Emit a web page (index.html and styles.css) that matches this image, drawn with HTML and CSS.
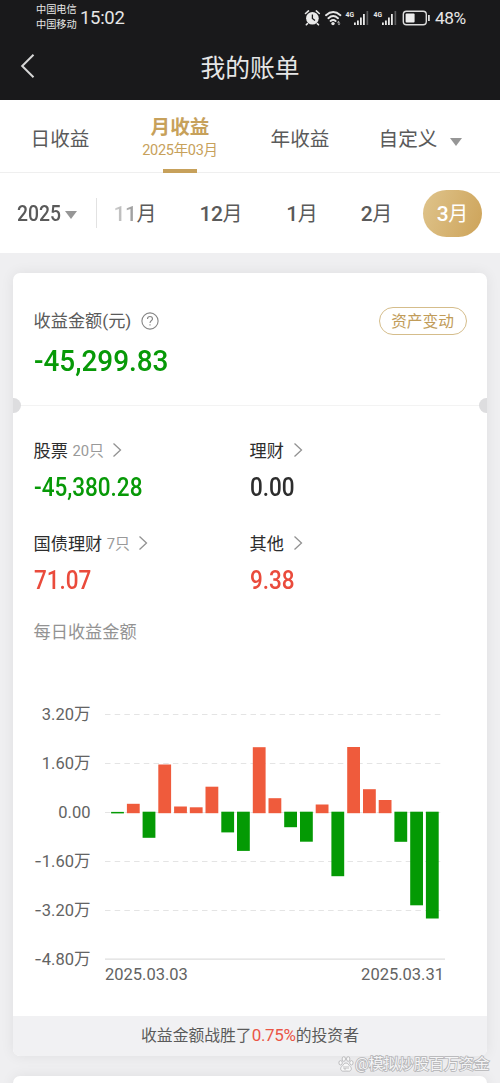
FILE: index.html
```html
<!DOCTYPE html>
<html lang="zh-CN">
<head>
<meta charset="utf-8">
<title>我的账单</title>
<link rel="stylesheet" href="styles.css">
</head>
<body>
<header class="top">
  <div class="status">
    <div class="carriers"><span>中国电信</span><span>中国移动</span></div>
    <span class="clock">15:02</span>
    <svg class="status-icons" width="128" height="20" viewBox="303 7 128 20">
      <g fill="none" stroke="#e6e6e6" stroke-width="1.6" stroke-linecap="round">
        <path d="M305.5 12.5l3-2.6M319.300 12.500l-3-2.600M307.500 22.600l-1.200 1.200M317.300 22.600l1.200 1.200"/>
        <path d="M326 14.200q7.200-6.200 14.400 0M328.400 17.200q4.800-4.200 9.600 0M330.600 20q2.600-2.200 5 0" stroke-width="1.900"/>
      </g>
      <circle cx="312.400" cy="17.300" r="6.300" fill="#e9e9e9"/>
      <path d="M312.400 13.500v4l2.600 2" fill="none" stroke="#19191b" stroke-width="1.300"/>
      <circle cx="333" cy="22.600" r="1.700" fill="#e6e6e6"/>
      <path d="M337 21.800l1.500-2 1.500 2zM337.500 22.500l1.500 1.800 1.500-1.800z" fill="#c4c4c4"/>
      <g fill="#e9e9e9">
        <text class="net" x="345.500" y="15.500" textLength="8.500" lengthAdjust="spacingAndGlyphs">4G</text>
        <path d="M354 21.500h1.800v2.500H354zM357 19.500h1.800v4.500H357zM360 16.500h1.800v7.500H360zM363 13h1.800v11H363z"/>
        <text class="net" x="373.600" y="15.500" textLength="8.500" lengthAdjust="spacingAndGlyphs">4G</text>
        <path d="M382 21.500h1.800v2.500H382zM385 19.500h1.800v4.500H385zM388 16.500h1.800v7.500H388zM391 13h1.800v11H391z"/>
      </g>
      <path d="M366.500 10h1.700v14h-1.700zM394.500 10h1.700v14h-1.700z" fill="#5c5c5e"/>
      <rect x="403.300" y="10.200" width="23" height="13.600" rx="3.200" fill="none" stroke="#dcdcdc" stroke-width="1.400"/>
      <rect x="405.600" y="12.600" width="9" height="8.800" rx="1" fill="#ededed"/>
      <path d="M428.900 14v6" stroke="#dcdcdc" stroke-width="1.800"/>
    </svg>
    <span class="battery">48%</span>
  </div>
  <div class="titlebar">
    <svg class="back" width="16" height="26" viewBox="0 0 16 26"><path d="M14.500 1.800L3.200 13l11.300 11.200" fill="none" stroke="#d6d6d6" stroke-width="2"/></svg>
    <h1>我的账单</h1>
  </div>
</header>

<nav class="tabs">
  <div class="tab">日收益</div>
  <div class="tab active"><b>月收益</b><small>2025年03月</small></div>
  <div class="tab">年收益</div>
  <div class="tab">自定义<i class="caret"></i></div>
</nav>

<div class="months">
  <div class="year"><span>2025</span><i class="caret"></i></div>
  <div class="month first"><em>11</em>月</div>
  <div class="month"><em>12</em>月</div>
  <div class="month"><em>1</em>月</div>
  <div class="month"><em>2</em>月</div>
  <div class="month selected"><em>3</em>月</div>
</div>

<main>
  <section class="card">
    <div class="summary">
      <div class="label-row">
        <span>收益金额(元)</span>
        <svg width="18" height="18" viewBox="0 0 18 18" fill="none" stroke="#858585" stroke-width="1.100"><circle cx="9" cy="9" r="8.100"/><path d="M6.500 7q0-2.500 2.500-2.500t2.500 2.400c0 1.500-2.500 1.800-2.500 4"/><path d="M9 12.200v1.300"/></svg>
        <button class="change">资产变动</button>
      </div>
      <div class="total green"><span>-45,299.83</span></div>
    </div>
    <div class="tear"></div>
    <div class="breakdown">
      <div class="item">
        <div class="name">股票<small>20只</small><svg class="go" width="10" height="16" viewBox="0 0 10 16"><path d="M1.500 1.500L8.500 8l-7 6.500"/></svg></div>
        <div class="amount green"><span>-45,380.28</span></div>
      </div>
      <div class="item">
        <div class="name">理财<svg class="go" width="10" height="16" viewBox="0 0 10 16"><path d="M1.500 1.500L8.500 8l-7 6.500"/></svg></div>
        <div class="amount"><span>0.00</span></div>
      </div>
      <div class="item">
        <div class="name">国债理财<small>7只</small><svg class="go" width="10" height="16" viewBox="0 0 10 16"><path d="M1.500 1.500L8.500 8l-7 6.500"/></svg></div>
        <div class="amount red"><span>71.07</span></div>
      </div>
      <div class="item">
        <div class="name">其他<svg class="go" width="10" height="16" viewBox="0 0 10 16"><path d="M1.500 1.500L8.500 8l-7 6.500"/></svg></div>
        <div class="amount red"><span>9.38</span></div>
      </div>
    </div>
    <h2>每日收益金额</h2>
    <svg class="chart" width="474" height="366" viewBox="13 650 474 366">
      <path class="grid" d="M105 714.500H441M105 763.500H441M105 812.500H441M105 861.500H441M105 910.500H441"/>
      <path class="axis" d="M105 959.200H445"/>
      <g class="ylabels">
        <text x="90.500" y="720">3.20万</text>
        <text x="90.500" y="769">1.60万</text>
        <text x="90.500" y="818">0.00</text>
        <text x="90.500" y="866.500"><tspan class="minus">-</tspan>1.60万</text>
        <text x="90.500" y="915.500"><tspan class="minus">-</tspan>3.20万</text>
        <text x="90.500" y="964.500"><tspan class="minus">-</tspan>4.80万</text>
      </g>
      <g class="gain">
        <rect x="126.900" y="803.800" width="12.800" height="9.400"/>
        <rect x="158.300" y="764.500" width="12.800" height="48.700"/>
        <rect x="174.100" y="806.500" width="12.800" height="6.700"/>
        <rect x="189.800" y="807.300" width="12.800" height="5.900"/>
        <rect x="205.500" y="786.700" width="12.800" height="26.500"/>
        <rect x="252.800" y="747.200" width="12.800" height="66"/>
        <rect x="268.500" y="798.200" width="12.800" height="15"/>
        <rect x="315.700" y="804.500" width="12.800" height="8.700"/>
        <rect x="347.200" y="747" width="12.800" height="66.200"/>
        <rect x="363" y="789.200" width="12.800" height="24"/>
        <rect x="378.700" y="800" width="12.800" height="13.200"/>
      </g>
      <g class="loss">
        <rect x="111.100" y="811.900" width="12.800" height="1.500"/>
        <rect x="142.600" y="811.700" width="12.800" height="26.100"/>
        <rect x="221.300" y="811.700" width="12.800" height="20.700"/>
        <rect x="237" y="811.700" width="12.800" height="39.200"/>
        <rect x="284.200" y="811.700" width="12.800" height="15.500"/>
        <rect x="300" y="811.700" width="12.800" height="30"/>
        <rect x="331.400" y="811.700" width="12.800" height="64.500"/>
        <rect x="394.400" y="811.700" width="12.800" height="30.100"/>
        <rect x="410.200" y="811.700" width="12.800" height="93.600"/>
        <rect x="425.900" y="811.700" width="12.800" height="106.800"/>
      </g>
      <text x="105" y="980">2025.03.03</text>
      <text x="444" y="980" text-anchor="end">2025.03.31</text>
    </svg>
    <div class="beat">收益金额战胜了<em>0.75%</em>的投资者</div>
  </section>
  <section class="card next"></section>
</main>

<div class="watermark">
  <svg width="16" height="16" viewBox="0 0 16 16"><ellipse cx="2.600" cy="6.800" rx="1.700" ry="2.200"/><ellipse cx="5.800" cy="3" rx="1.700" ry="2.300"/><ellipse cx="10.200" cy="3" rx="1.700" ry="2.300"/><ellipse cx="13.400" cy="6.800" rx="1.700" ry="2.200"/><path d="M8 7c-2 0-2.500 2-4.300 3.500C1.600 12.500 3 15.400 5.300 15.200c1.800-.2 3.600-.2 5.400 0 2.300.2 3.700-2.700 1.600-4.700C10.500 9 10 7 8 7zM6 10v3h2v-3M10 10v3"/></svg>
  <span>@模拟炒股百万资金</span>
</div>
</body>
</html>
```
FILE: styles.css
```css
* { box-sizing: border-box; }
body {
  margin: 0;
  width: 500px;
  height: 1083px;
  overflow: hidden;
  background: #efeff1;
  color: #5a5a5a;
  font-family: Roboto, "Noto Sans CJK SC", sans-serif;
}
em, i { font-style: normal; }

.top { height: 100px; background: #19191b; color: #e6e6e6; }
.status { display: flex; align-items: center; height: 35px; padding-left: 36px; }
.carriers { display: flex; flex-direction: column; width: 44px; font-size: 10.2px; line-height: 14.500px; }
.clock { width: 223px; font-size: 18.500px; letter-spacing: -.3px; }
.status-icons { display: block; flex: none; }
.net { font: 700 8px Roboto, sans-serif; }
.battery { margin-left: 4px; font-size: 17.300px; letter-spacing: -.4px; }
.titlebar { display: flex; align-items: center; height: 65px; padding-left: 19px; }
.back { display: block; margin-bottom: 3px; }
h1 { margin: 2px 0 0; width: 430px; text-align: center; font-size: 24.800px; font-weight: 400; line-height: 36px; }

.tabs { display: grid; grid-template-columns: repeat(4, 120px); height: 73px; background: #fff; border-bottom: 1px solid #efefef; }
.tab { display: flex; align-items: center; justify-content: center; height: 72px; padding-top: 8px; font-size: 19.600px; line-height: 28px; }
.tab.active { flex-direction: column; justify-content: flex-start; height: 73px; padding-top: 14px; color: #c7a15b; }
.active b { font-weight: 700; line-height: 27px; }
.active small { font-size: 14.500px; line-height: 20px; letter-spacing: -.3px; }
.active::after { content: ""; width: 34px; height: 4px; margin-top: 8px; background: #c7a15b; }
.caret { border: 6px solid transparent; border-top: 8px solid #969696; border-bottom: 0; }
.tab .caret { margin: 4px -1px 0 13px; }

.months { display: grid; grid-template-columns: 97px 76px 96px 66px 88px 59px; align-items: center; height: 80px; background: #fff; }
.year { display: flex; align-items: center; height: 30px; padding-left: 17px; border-right: 1px solid #e2e2e2; font-size: 21.500px; font-weight: 500; }
.year span { width: 48px; transform: scaleX(.9); transform-origin: left; }
.year .caret { margin-top: 3px; }
.month { text-align: center; font-size: 20px; line-height: 46px; padding-top: 1px; }
.month:nth-child(5) { padding-right: 5px; }
.month em { font-size: 21px; font-weight: 500; letter-spacing: -.5px; }
.first em { background: linear-gradient(90deg, #d0d0d0, #959595); background-clip: text; color: transparent; }
.selected { height: 47px; border-radius: 24px; color: #fff; background: linear-gradient(110deg, #dfc48c, #cda359); }

main { padding: 20px 13px 0; }
.card { background: #fff; border-radius: 7px; box-shadow: 0 0 14px rgba(0, 0, 0, .07); }
.summary { height: 132px; padding: 33px 20.500px 0; }
.label-row { display: flex; align-items: center; height: 29px; font-size: 17.200px; }
.label-row span { margin-top: -2px; }
.label-row svg { margin-left: 10px; }
.change { margin-left: auto; width: 88px; height: 28px; padding: 0; border: 1px solid #d5bd8b; border-radius: 14px; background: none; color: #c19c59; font: 400 15.700px/25px "Noto Sans CJK SC", sans-serif; }
.green { color: #079907; }
.red { color: #ea4b3c; }
.total { font-size: 30px; font-weight: 500; line-height: 36px; margin-top: 8px; }
.total span, .amount span { display: inline-block; transform-origin: left; }
.total span { transform: scaleX(.93); }
.amount span { transform: scaleX(.9); }
.tear { display: flex; align-items: center; justify-content: space-between; height: 0; border-top: 1px solid #f3f3f3; }
.tear::before, .tear::after { content: ""; flex: none; width: 8px; height: 15px; margin-top: -1px; background: #dddddf; }
.tear::before { border-radius: 0 8px 8px 0; }
.tear::after { border-radius: 8px 0 0 8px; }
.breakdown { display: grid; grid-template-columns: 216px 1fr; grid-auto-rows: 93px; padding: 29px 20.500px 0; color: #2d2d2d; }
.name { display: flex; align-items: center; height: 28px; margin-bottom: 2px; font-size: 17.200px; }
.name small { margin-left: 4.500px; margin-right: -1px; font-size: 14.800px; color: #999; }
.go { margin: 2px 0 0 9px; fill: none; stroke: #929292; stroke-width: 1.300; }
.amount { height: 46px; font-size: 25px; font-weight: 500; line-height: 46px; }
.amount.green { color: #079907; }
.amount.red { color: #ea4b3c; }
h2 { margin: -3px 0 0; padding: 0 20.500px; height: 28px; font-size: 17.200px; font-weight: 400; line-height: 28px; color: #939393; }
.chart { display: block; margin-top: 4px; font-size: 16.500px; fill: #636363; }
.ylabels { text-anchor: end; }
.minus { font-family: Inter, sans-serif; }
.grid { stroke: #e4e4e4; stroke-width: 1; stroke-dasharray: 5.500 4.200; }
.axis { stroke: #dedede; stroke-width: 1.200; }
.gain { fill: #ef5b3c; }
.loss { fill: #049a04; }
.beat { height: 40px; border-radius: 0 0 7px 7px; background: #f1f1f3; text-align: center; font-size: 15.800px; line-height: 39px; }
.beat em { color: #ea5546; font-size: 17px; letter-spacing: -.3px; }
.next { height: 40px; margin-top: 20px; }

.watermark { position: absolute; left: 338px; top: 1054px; display: flex; align-items: center; gap: 1px; height: 20px; font-size: 15.100px; line-height: 20px; white-space: nowrap; color: #f5f5f6; }
.watermark span { -webkit-text-stroke: 1.600px #b4b4b6; paint-order: stroke fill; }
.watermark svg { fill: #f8f8f8; stroke: #b0b0b2; stroke-width: .8; }
```
